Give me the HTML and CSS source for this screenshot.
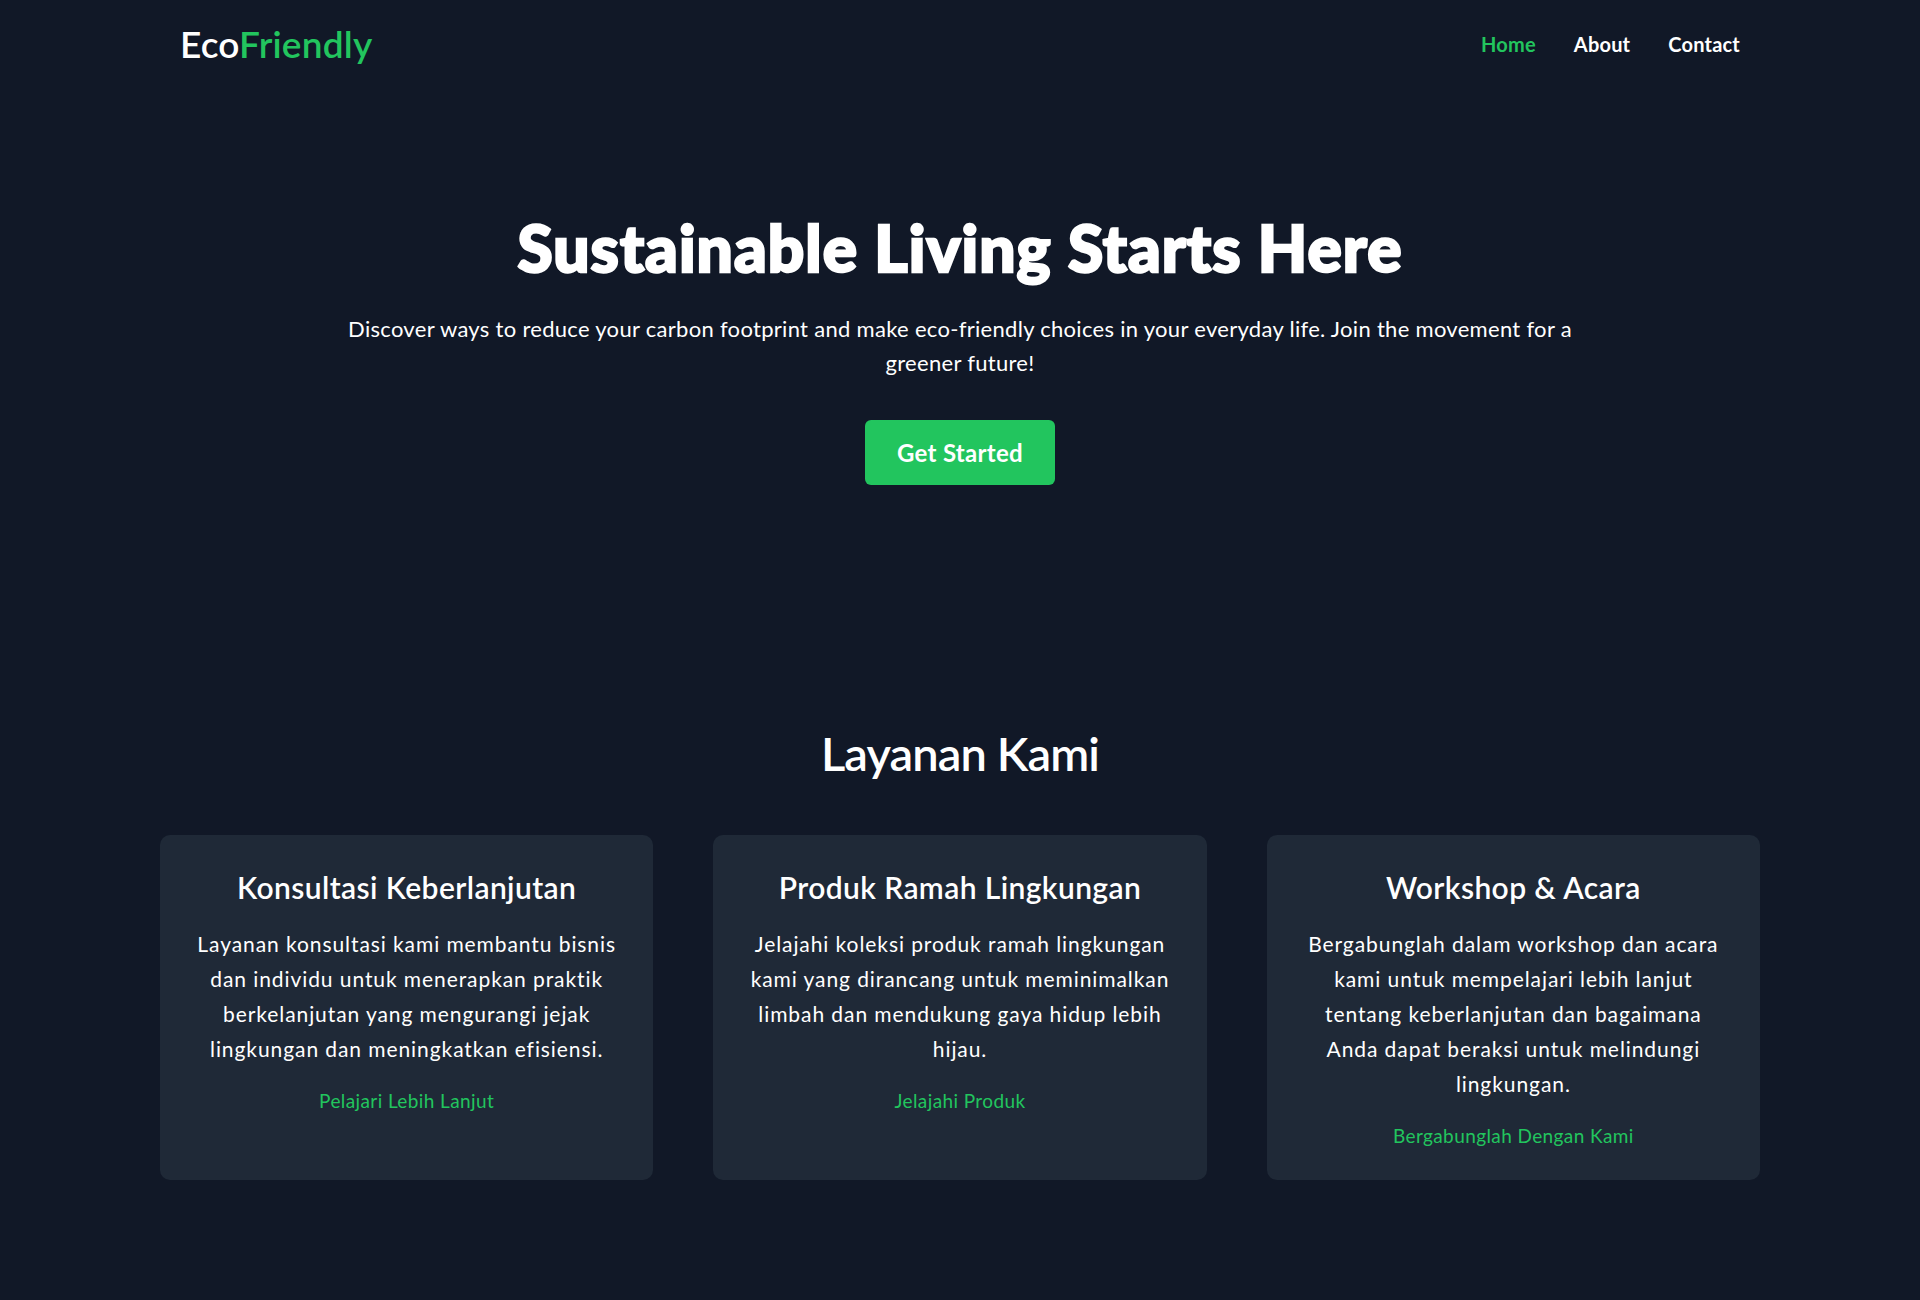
FILE: index.html
```html
<!DOCTYPE html>
<html lang="id">
<head>
<meta charset="utf-8">
<title>EcoFriendly</title>
<link rel="stylesheet" href="styles.css">
</head>
<body>
<header class="site-header">
  <div class="header-inner">
    <a class="logo" href="#">Eco<span class="logo-accent">Friendly</span></a>
    <nav class="nav">
      <a class="nav-link nav-link-active" href="#">Home</a>
      <a class="nav-link" href="#">About</a>
      <a class="nav-link" href="#">Contact</a>
    </nav>
  </div>
</header>

<main>
  <section class="hero">
    <h1 class="hero-title">Sustainable Living Starts Here</h1>
    <p class="hero-text">Discover ways to reduce your carbon footprint and make eco-friendly choices in your everyday life. Join the movement for a greener future!</p>
    <a class="btn" href="#">Get Started</a>
  </section>

  <section class="services">
    <h2 class="section-title">Layanan Kami</h2>
    <div class="cards">
      <article class="card">
        <h3 class="card-title">Konsultasi Keberlanjutan</h3>
        <p class="card-text">Layanan konsultasi kami membantu bisnis dan individu untuk menerapkan praktik berkelanjutan yang mengurangi jejak lingkungan dan meningkatkan efisiensi.</p>
        <a class="card-link" href="#">Pelajari Lebih Lanjut</a>
      </article>
      <article class="card">
        <h3 class="card-title">Produk Ramah Lingkungan</h3>
        <p class="card-text">Jelajahi koleksi produk ramah lingkungan kami yang dirancang untuk meminimalkan limbah dan mendukung gaya hidup lebih hijau.</p>
        <a class="card-link" href="#">Jelajahi Produk</a>
      </article>
      <article class="card">
        <h3 class="card-title">Workshop &amp; Acara</h3>
        <p class="card-text">Bergabunglah dalam workshop dan acara kami untuk mempelajari lebih lanjut tentang keberlanjutan dan bagaimana Anda dapat beraksi untuk melindungi lingkungan.</p>
        <a class="card-link" href="#">Bergabunglah Dengan Kami</a>
      </article>
    </div>
  </section>
</main>
</body>
</html>
```

FILE: styles.css
```css
* { box-sizing: border-box; }

html, body {
  margin: 0;
  padding: 0;
}

body {
  background: #111827;
  color: #ffffff;
  font-family: "Lato", "Open Sans", sans-serif;
  min-height: 1300px;
}

a { text-decoration: none; }

.site-header {
  padding: 20px 0;
}

.header-inner {
  max-width: 1600px;
  margin: 0 auto;
  padding: 0 20px;
  display: flex;
  align-items: center;
  justify-content: space-between;
}

.logo {
  color: #ffffff;
  font-size: 37px;
  font-weight: 600;
  line-height: 48px;
  letter-spacing: 0.2px;
}

.logo-accent { color: #22c55e; }

.nav {
  display: flex;
  gap: 38px;
}

.nav-link {
  color: #ffffff;
  font-size: 20px;
  font-weight: 700;
  line-height: 28px;
  letter-spacing: 0.2px;
}

.nav-link-active { color: #22c55e; }

.hero {
  padding: 122px 20px 0;
  text-align: center;
}

.hero-title {
  margin: 0;
  font-size: 64px;
  font-weight: 900;
  line-height: 76px;
  letter-spacing: 1.05px;
  -webkit-text-stroke: 2.4px #ffffff;
}

.hero-text {
  max-width: 1260px;
  margin: 26px auto 0;
  font-size: 22px;
  line-height: 34px;
  letter-spacing: 0.3px;
}

.btn {
  display: inline-block;
  margin-top: 40px;
  padding: 16px 32px;
  background: #22c55e;
  color: #ffffff;
  font-size: 24px;
  font-weight: 700;
  line-height: 33px;
  letter-spacing: 0.3px;
  border-radius: 6px;
}

.services {
  max-width: 1600px;
  margin: 0 auto;
  padding: 236px 0 120px;
}

.section-title {
  margin: 0 0 50px;
  text-align: center;
  font-size: 47px;
  font-weight: 600;
  line-height: 64px;
  letter-spacing: -0.9px;
}

.cards {
  display: grid;
  grid-template-columns: repeat(3, 1fr);
  gap: 60px;
}

.card {
  background: #1f2937;
  border-radius: 10px;
  padding: 32px 32px 30px;
  text-align: center;
}

.card-title {
  margin: 0;
  font-size: 30px;
  font-weight: 600;
  line-height: 40px;
  letter-spacing: 0.4px;
}

.card-text {
  margin: 19px 0 0;
  font-size: 21px;
  line-height: 35px;
  letter-spacing: 0.92px;
}

.card-link {
  display: inline-block;
  margin-top: 21px;
  color: #22c55e;
  font-size: 19px;
  line-height: 28px;
  letter-spacing: 0.4px;
}
```
